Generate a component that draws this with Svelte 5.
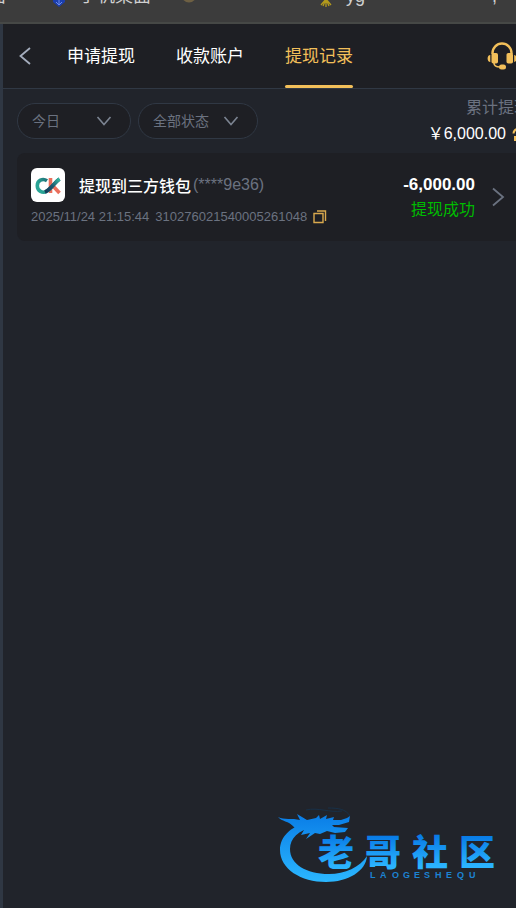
<script>
  let period = $state('今日');
  let status = $state('全部状态');
  const tabs = ['申请提现', '收款账户', '提现记录'];
  let active = $state('提现记录');
  const records = [
    {
      title: '提现到三方钱包',
      account: '(****9e36)',
      time: '2025/11/24 21:15:44',
      id: '310276021540005261048',
      amount: '-6,000.00',
      state: '提现成功'
    }
  ];
</script>

<div class="page">
  <div class="bookmarks">
    <span class="bm first">面</span>
    <span class="bm desk">
      <svg width="12" height="16" viewBox="0 0 12 16"><path d="M0 2h12v9l-6 5-6-5z" fill="#1c3fae" /><path d="M3 11l3 3 3-3M6 8v6" stroke="#6d8be8" fill="none" /></svg>
      手机桌面
    </span>
    <span class="bm dot"><svg width="16" height="16" viewBox="0 0 16 16"><circle cx="8" cy="8" r="7.500" fill="#6e6043" /></svg></span>
    <span class="bm yg">
      <svg width="16" height="16" viewBox="0 0 16 16"><path d="M8 0v16M0 8h16M3 2l10 12M13 2L3 14M5 1l6 14M11 1L5 15" stroke="#b39a1c" stroke-width="1.300" /></svg>
      yg
    </span>
    <span class="bm last">,</span>
  </div>

  <main>
    <header>
      <button class="back" aria-label="返回">
        <svg width="12" height="18" viewBox="0 0 12 18"><path d="M11 1L1.500 9 11 17" fill="none" stroke="#a4adbd" stroke-width="1.800" /></svg>
      </button>
      <nav>
        {#each tabs as tab}
          <button class="tab" class:active={tab === active} onclick={() => (active = tab)}>{tab}</button>
        {/each}
      </nav>
      <button class="service" aria-label="客服">
        <svg width="30" height="28" viewBox="0 0 30 28" fill="#f2bf5a">
          <path d="M5.500 12V11a9.500 9.500 0 0 1 19 0v1" fill="none" stroke="#f2bf5a" stroke-width="2.400" />
          <rect x="4.500" y="11" width="6.500" height="10.500" rx="1.800" />
          <rect x="19.500" y="11" width="6.500" height="10.500" rx="1.800" />
          <path d="M3.300 13v7C-.3 20-.3 13 3.300 13zM27.200 13v7c3.100 0 3.100-7 0-7z" />
          <path d="M7 21c0 3 2 4 6 4" fill="none" stroke="#f2bf5a" stroke-width="1.600" />
          <rect x="12" y="22.500" width="7" height="5" rx="2.500" />
        </svg>
      </button>
    </header>

    <section class="content">
      <div class="toolbar">
        <label class="pick period">
          <select bind:value={period} aria-label="日期">
            <option>今日</option><option>昨日</option>
          </select>
          <svg width="16" height="10" viewBox="0 0 16 10"><path d="M1.500 1L8 8.500 14.500 1" /></svg>
        </label>
        <label class="pick status">
          <select bind:value={status} aria-label="状态">
            <option>全部状态</option><option>提现成功</option>
          </select>
          <svg width="16" height="10" viewBox="0 0 16 10"><path d="M1.500 1L8 8.500 14.500 1" /></svg>
        </label>
        <div class="total">
          <span class="caption">累计提现</span>
          <span class="sum">￥6,000.00
            <button aria-label="刷新">
              <svg width="18" height="14" viewBox="0 0 18 14" fill="none" stroke="#f2bf5a" stroke-width="2"><path d="M1.500 6.500C2 1 10 0 14 4M16.500 7.500c-.5 5.500-9 6.500-13 2M14 0v4h-4M3 14v-4h4" /></svg>
            </button>
          </span>
        </div>
      </div>

      {#each records as r}
        <article>
          <div class="info">
            <div class="title">
              <svg class="logo" width="34" height="34" viewBox="0 0 34 34" fill="none" stroke-width="3.600">
                <defs>
                  <linearGradient id="ck" gradientUnits="userSpaceOnUse" x1="15" y1="24" x2="28" y2="11"><stop offset="0" stop-color="#123a58" /><stop offset=".5" stop-color="#1c5a70" /><stop offset="1" stop-color="#35b8a0" /></linearGradient>
                  <linearGradient id="cc" x1="0" y1="0.300" x2="1" y2="0"><stop offset="0" stop-color="#2aa596" /><stop offset="1" stop-color="#123a58" /></linearGradient>
                </defs>
                <rect width="34" height="34" rx="6" fill="#fff" />
                <path d="M19.500 10v15M22 18l6.500 7" stroke="#ea6f5c" />
                <path d="M16 12.800C11.500 9.800 6.300 12.500 6.300 17.700S11.500 26 16 23c5-3 8-9 12.500-12" stroke="url(#cc)" />
                <path d="M14 24c5-2 9-9 14.500-13" stroke="url(#ck)" />
              </svg>
              <strong>{r.title}</strong>
              <span class="account">{r.account}</span>
            </div>
            <div class="meta">
              <time>{r.time}</time>
              <span>{r.id}</span>
              <button aria-label="复制">
                <svg width="14" height="14" viewBox="0 0 14 14" fill="none" stroke="#d9a94e" stroke-width="1.400"><path d="M1 3.500h9v9H1zM4 1h8.500v10" /></svg>
              </button>
            </div>
          </div>
          <div class="result">
            <b>{r.amount}</b>
            <span>{r.state}</span>
          </div>
          <svg class="next" width="13" height="20" viewBox="0 0 13 20"><path d="M1 1.500L11 10 1 18.500" fill="none" stroke="#6b7280" stroke-width="1.800" /></svg>
        </article>
      {/each}
    </section>

    <svg class="mark" width="224" height="80" viewBox="0 0 224 80">
      <defs>
        <linearGradient id="blue" gradientUnits="userSpaceOnUse" x1="0" y1="6" x2="0" y2="76"><stop offset="0" stop-color="#087be6" /><stop offset="1" stop-color="#2bb7ff" /></linearGradient>
        <linearGradient id="glyph" gradientUnits="userSpaceOnUse" x1="0" y1="30" x2="0" y2="60"><stop offset="0" stop-color="#087be6" /><stop offset="1" stop-color="#2bb4ff" /></linearGradient>
      </defs>
      <g fill="url(#blue)">
        <path d="M28 17C12 21 2 31 2 44c0 19 21 32 46 32 22 0 40-11 41-26-7 11-22 18-38 18C28 68 12 58 12 43c0-11 8-18 24-23z" />
        <path d="M0 11c6 3 14 1 22 3l-3-6 10 6 9-2 3-3 1 4 7-4-1 4 8-2-1 3 8 0 6-2 3-2-1 6-10 3-7 0 2 2 14 1-3 4-10 1-8-2-7 3-5-1-9 6 4-6-9 2 3-5-9-2C10 14 4 16 0 11z" />
      </g>
      <path d="M28 4c12-3 24 3 36 1M50 2c10 0 18 1 22 8" fill="none" stroke="#15344f" stroke-width=".8" />
      <g fill="url(#glyph)" class="name">
        <text x="40 87 134 181" y="60">老哥社区</text>
      </g>
      <text class="latin" x="92 102 114 125 136 146 157 168 179 191" y="72">LAOGESHEQU</text>
    </svg>
  </main>
</div>

<style>
  :global(body) { background: #21242b; }
  .page, .page * { box-sizing: border-box; }
  .page {
    min-height: 100vh;
    display: flex;
    flex-direction: column;
    overflow: hidden;
    font-family: "Liberation Sans", "Noto Sans CJK SC", sans-serif;
    font-size: 16px;
    color: #fff;
    background: #21242b;
  }
  button { padding: 0; border: 0; background: none; font: inherit; color: inherit; cursor: pointer; display: inline-flex; }
  .bookmarks {
    position: relative;
    height: 24px;
    background: #3c3c3c;
    border-bottom: 2px solid #464846;
    overflow: hidden;
    color: #d0d0d0;
    line-height: 24px;
  }
  .bm { position: absolute; top: -16px; display: flex; align-items: center; gap: 14px; font-size: 18px; white-space: nowrap; }
  .bm svg { position: relative; top: 3px; }
  .bm.first { left: -12px; }
  .desk { left: 53px; }
  .dot { left: 181px; }
  .yg { left: 318px; gap: 12px; }
  .last { left: 492px; }
  main { position: relative; flex: 1; border-left: 3px solid #2f3743; }
  header {
    display: flex;
    align-items: center;
    height: 65px;
    width: calc(100% + 15px);
    padding: 0 14px 0 16px;
    background: #1e1f24;
    border-bottom: 1px solid #303844;
  }
  nav { display: flex; gap: 41px; margin-left: 36px; height: 64px; flex: 1; }
  .tab { align-items: center; padding-bottom: 4px; font-size: 17px; position: relative; white-space: nowrap; }
  .active { color: #f2bf5a; }
  .active::after { content: ""; position: absolute; left: 0; right: 0; bottom: 0; height: 3px; border-radius: 2px; background: #f2bf5a; }
  .content { width: calc(100% + 28px); padding: 6px 14px; }
  .toolbar { display: flex; align-items: center; gap: 7px; height: 58px; padding-bottom: 6px; }
  .pick { position: relative; display: block; height: 36px; }
  .period { width: 114px; }
  .status { width: 120px; }
  select {
    appearance: none;
    width: 100%;
    height: 36px;
    padding: 0 14px;
    border: 1px solid #303844;
    border-radius: 18px;
    background: #1e1f24;
    color: #6b7280;
    font: inherit;
    font-size: 14px;
  }
  .pick svg { position: absolute; right: 19px; top: 13px; fill: none; stroke: #7c8492; stroke-width: 1.6; pointer-events: none; }
  .total { margin-left: auto; display: flex; flex-direction: column; align-items: flex-end; line-height: 26px; white-space: nowrap; }
  .caption { color: #6b7280; }
  .sum { display: flex; align-items: center; gap: 6px; }
  article { display: flex; align-items: center; height: 88px; padding: 14px 25px 14px 14px; border-radius: 8px; background: #1e1f24; }
  .info { flex: 1; display: flex; flex-direction: column; gap: 5px; }
  .title { display: flex; align-items: center; white-space: nowrap; }
  .logo { margin-right: 14px; }
  strong { font-weight: 500; margin-right: 2px; }
  .account { color: #6b7280; }
  .meta { display: flex; align-items: center; gap: 6px; color: #6b7280; font-size: 13px; line-height: 20px; white-space: nowrap; }
  .result { display: flex; flex-direction: column; align-items: flex-end; line-height: 25px; white-space: nowrap; }
  .result b { font-size: 17px; }
  .result span { color: #0b0; }
  .next { margin-left: 17px; }
  .mark { position: absolute; right: 14px; bottom: 22px; }
  .name { font: 900 36px "Noto Sans CJK SC", sans-serif; }
  .latin { font: bold 9px "Liberation Sans", sans-serif; fill: #1c83d2; }
</style>
